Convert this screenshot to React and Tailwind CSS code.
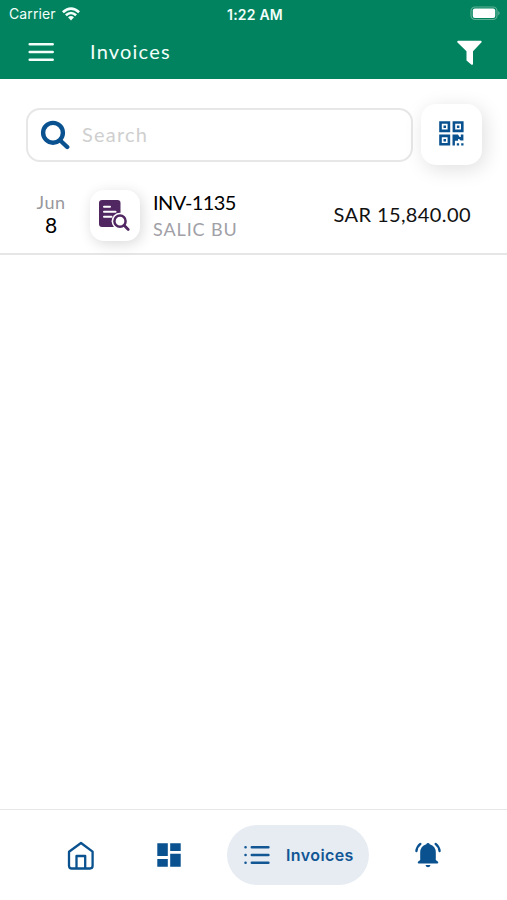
function WifiIcon() {
  return (
    <svg width="18" height="14" viewBox="0 0 18 14" fill="#f2fffa">
      <path d="M0 4.3Q9-3.6 18 4.3L16.2 6.2Q9-.2 1.8 6.2Z" />
      <path d="M3 7.3Q9 2 15 7.3L13.2 9.2Q9 5.5 4.8 9.2Z" />
      <path d="M6 10.3Q9 7.7 12 10.3L9 13.5Z" />
    </svg>
  );
}

function BatteryIcon() {
  return (
    <svg width="31" height="15" viewBox="0 0 31 15" fill="none">
      <rect x="1" y="1" width="26" height="12.5" rx="4" stroke="#5db093" strokeWidth="1.2" />
      <rect x="2.8" y="2.6" width="22.4" height="9.3" rx="2" fill="#fff" />
      <path d="M28.3 5q2.6 2.2 0 4.5z" fill="#6bb89d" />
    </svg>
  );
}

function MenuIcon() {
  return (
    <svg width="26" height="20" viewBox="0 0 26 20" stroke="#f2fffa" strokeWidth="2.5" strokeLinecap="round">
      <path d="M1.7 2.2h23M1.7 10h23M1.7 17.8h23" />
    </svg>
  );
}

function FilterIcon() {
  return (
    <svg width="25" height="26" viewBox="0 0 25 26" fill="#fff">
      <path d="M1 .8h23q1.2.6.3 1.8L16 11.2V24q-.5 1.3-1.8.6L9.5 20.6V11.2L.5 2.6Q-.3 1.3 1 .8Z" />
    </svg>
  );
}

function SearchIcon() {
  return (
    <svg width="30" height="30" viewBox="0 0 30 30" fill="none" stroke="#09518f" strokeLinecap="round">
      <circle cx="13" cy="12.8" r="9.9" strokeWidth="4.4" />
      <path d="M20.8 21l6.4 6" strokeWidth="4.4" />
    </svg>
  );
}

function QrIcon() {
  return (
    <svg width="25" height="25" viewBox="0 0 25 25" fill="none" stroke="#09518f" strokeWidth="2.6">
      <path d="M1.5 1.5h8.4v8.4H1.5zM14.9 1.5h8.4v8.4h-8.4zM1.5 14.9h8.4v8.4H1.5z" />
      <path
        d="M4.5 4.5h2.5v2.5H4.5zM17.9 4.5h2.5v2.5h-2.5zM4.5 17.9h2.5v2.5H4.5zM13.5 13.5h5.5l1.6 2.5h1.2v-2.5h2.6v6h-2.8l-1.5-1.6h-1v1.8h-3.2v4.9h-2.4zM17.8 22.3h2.3v2.3h-2.3zM22.2 22.3h2.3v2.3h-2.3z"
        fill="#09518f"
        stroke="none"
      />
    </svg>
  );
}

function InvoiceIcon() {
  return (
    <svg width="32" height="33" viewBox="0 0 32 33" fill="none">
      <path d="M4 1h15.5a3 3 0 0 1 3 3v24H4a3 3 0 0 1-3-3V4a3 3 0 0 1 3-3Z" fill="#512762" />
      <path d="M6 7.7h6M6 12.7h11.5M6 17.7h7.5" stroke="#fff" strokeWidth="2" strokeLinecap="round" />
      <circle cx="22" cy="22.2" r="8.4" fill="#fff" />
      <circle cx="22" cy="22.2" r="5.6" stroke="#512762" strokeWidth="2.5" />
      <path d="M26.3 26.5l3.9 4" stroke="#512762" strokeWidth="2.7" strokeLinecap="round" />
    </svg>
  );
}

function HomeIcon() {
  return (
    <svg width="28" height="29" viewBox="0 0 28 29" fill="none" stroke="#09518f" strokeWidth="2.3" strokeLinejoin="round">
      <path d="M2 10.7 14 2l11.6 8.7v14.1q0 2.7-2.7 2.7H4.7Q2 27.5 2 24.8Z" />
      <path d="M9.5 27V15h8.7v12" />
    </svg>
  );
}

function DashboardIcon() {
  return (
    <svg width="24" height="24" viewBox="0 0 24 24" fill="#09518f">
      <path d="M.3.2h10.5v12.9H.3zM13.2.2h10.5V8H13.2zM.3 16h10.5v7.7H.3zM13.2 10.8h10.5v12.9H13.2z" />
    </svg>
  );
}

function ListIcon() {
  return (
    <svg width="26" height="20" viewBox="0 0 26 20" stroke="#125694" strokeWidth="2.5" strokeLinecap="round">
      <path d="M7.8 2.2h16.6M7.8 10h16.6M7.8 17.8h16.6M1.5 2.2h.1M1.5 10h.1M1.5 17.8h.1" />
    </svg>
  );
}

function BellIcon() {
  return (
    <svg width="26" height="26" viewBox="0 0 26 26" fill="#09518f">
      <path d="M11.3 2.3a1.8 1.8 0 0 1 3.4 0Q20.8 4.3 20.8 10.5v7.5l2.2 1.8q1 1.6-.7 1.8H3.7q-1.6-.2-.7-1.8L5.2 18v-7.5q0-6.2 6.1-8.2Z" />
      <path d="M10.5 23h5q-.5 2.2-2.5 2.3-2-.1-2.5-2.3Z" />
      <path d="M5.4 1.9Q2 4.6 1.4 9M20.6 1.9q3.4 2.7 4 7.1" fill="none" stroke="#09518f" strokeWidth="2.3" strokeLinecap="round" />
    </svg>
  );
}

function Header() {
  return (
    <header className="h-[79px] bg-[#028360] text-[#f2fffa]">
      <div className="grid h-[27px] grid-cols-3 items-center pl-[9px] pr-[6px]">
        <div className="flex items-center gap-[6px] font-['Inter',sans-serif] text-[14px]">
          <span className="w-[47px] tracking-[0.1px]">Carrier</span>
          <WifiIcon />
        </div>
        <span className="pt-px text-center font-['Inter',sans-serif] text-[14px] font-semibold tracking-[0.2px]">1:22 AM</span>
        <div className="flex justify-end">
          <BatteryIcon />
        </div>
      </div>
      <div className="flex h-[50px] items-center pl-[28px] pr-[25px]">
        <MenuIcon />
        <h1 className="ml-[36px] flex-1 pb-[2px] text-[20px] tracking-[1.2px]">Invoices</h1>
        <div className="pt-px">
          <FilterIcon />
        </div>
      </div>
    </header>
  );
}

function SearchBar() {
  return (
    <div className="flex items-center gap-2 pl-[26px] pr-[25px] pt-[25px]">
      <div className="flex h-[54px] w-[387px] items-center rounded-[14px] border-2 border-[#e7e7e7] pl-[12px]">
        <SearchIcon />
        <span className="ml-[12px] pb-[2px] text-[20px] tracking-[1.2px] text-[#cfcfcf]">Search</span>
      </div>
      <button className="flex h-[61px] w-[61px] items-center justify-center rounded-[15px] bg-white pb-[2px] pr-[1px] shadow-[3px_4px_20px_rgba(0,0,0,0.13)]">
        <QrIcon />
      </button>
    </div>
  );
}

function InvoiceRow({ month, day, number, client, amount }) {
  return (
    <div className="flex h-[90px] items-center border-b-2 border-[#e6e6e6] pl-[26px] pr-[36px] pt-[12px]">
      <div className="w-[50px] pb-[3px] text-center">
        <div className="text-[18px] leading-[22px] tracking-[0.5px] text-[#98989e]">{month}</div>
        <div className="text-[21px] leading-[23px] text-black">{day}</div>
      </div>
      <div className="ml-[14px] flex h-[51px] w-[50px] items-center justify-center rounded-[14px] bg-white pr-[2px] shadow-[2px_3px_14px_rgba(0,0,0,0.15)]">
        <InvoiceIcon />
      </div>
      <div className="ml-[13px] flex-1 pt-px">
        <div className="text-[20px] leading-[27px] tracking-[-0.6px] text-black">{number}</div>
        <div className="text-[18px] leading-[27px] tracking-[0.9px] text-[#a0a0a6]">{client}</div>
      </div>
      <div className="pb-[2px] text-[20px] tracking-[0.4px] text-[#111]">{amount}</div>
    </div>
  );
}

function BottomNav() {
  return (
    <nav className="flex h-[91px] items-center border-t border-[#e7e7e7] pl-[67px]">
      <HomeIcon />
      <div className="ml-[62px]">
        <DashboardIcon />
      </div>
      <div className="ml-[46px] flex h-[60px] w-[142px] items-center rounded-full bg-[#e7ecf3] pl-[17px]">
        <ListIcon />
        <span className="ml-[16px] font-['Inter',sans-serif] text-[16px] font-semibold tracking-[0.4px] text-[#125694]">Invoices</span>
      </div>
      <div className="ml-[46px]">
        <BellIcon />
      </div>
    </nav>
  );
}

export default function App() {
  return (
    <div className="flex h-[900px] w-[507px] flex-col overflow-hidden bg-white font-['Lato',sans-serif]">
      <Header />
      <main className="flex-1">
        <SearchBar />
        <InvoiceRow month="Jun" day="8" number="INV-1135" client="SALIC BU" amount="SAR 15,840.00" />
      </main>
      <BottomNav />
    </div>
  );
}
